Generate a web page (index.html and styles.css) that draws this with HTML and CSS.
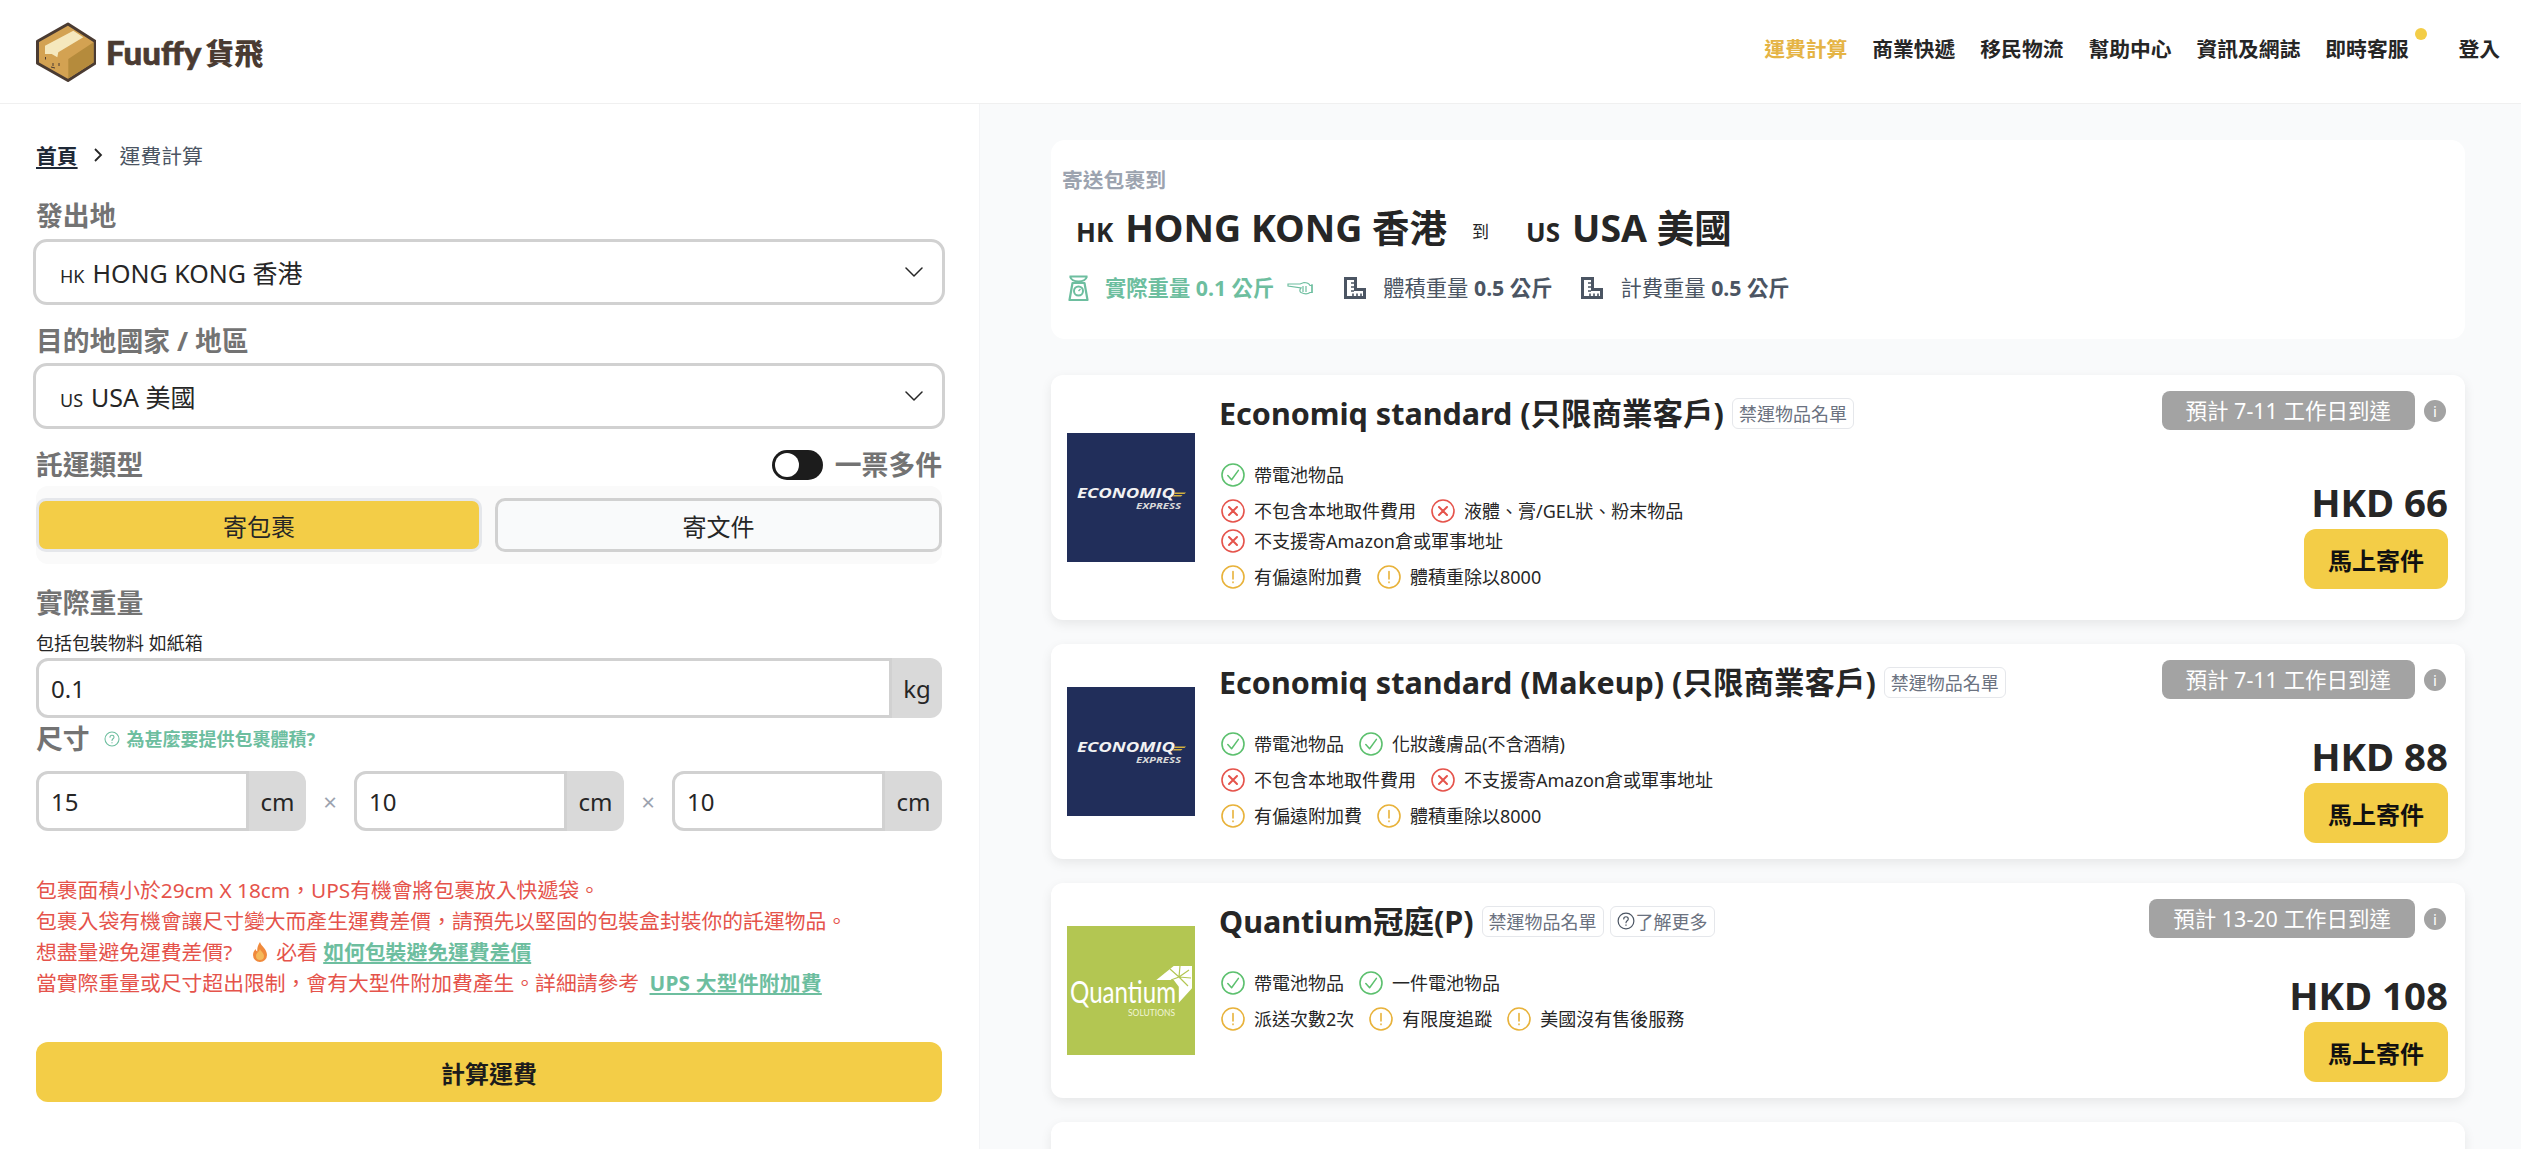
FILE: index.html
```html
<!DOCTYPE html>
<html lang="zh-Hant">
<head>
<meta charset="utf-8">
<title>Fuuffy 貨飛 運費計算</title>
<link rel="stylesheet" href="styles.css">
</head>
<body>
<svg class="sprite" width="0" height="0" aria-hidden="true">
  <symbol id="ok" viewBox="0 0 24 24"><circle cx="12" cy="12" r="11" fill="none" stroke="currentColor" stroke-width="1.6"/><path d="M6.8 12.6l3.8 4.2 6.8-9.4" fill="none" stroke="currentColor" stroke-width="1.5" stroke-linecap="round" stroke-linejoin="round"/></symbol>
  <symbol id="no" viewBox="0 0 24 24"><circle cx="12" cy="12" r="11" fill="none" stroke="currentColor" stroke-width="1.6"/><path d="M8 8l8 8M16 8l-8 8" fill="none" stroke="currentColor" stroke-width="2" stroke-linecap="round"/></symbol>
  <symbol id="warn" viewBox="0 0 24 24"><circle cx="12" cy="12" r="11" fill="none" stroke="currentColor" stroke-width="1.6"/><path d="M12 6.5v7.5M12 17v.6" fill="none" stroke="currentColor" stroke-width="1.6" stroke-linecap="round"/></symbol>
  <symbol id="chev" viewBox="0 0 18 10"><path d="M1 1l8 8 8-8" fill="none" stroke="currentColor" stroke-width="1.5" stroke-linecap="round" stroke-linejoin="round"/></symbol>
  <symbol id="ruler" viewBox="0 0 24 24"><path d="M1 1h13v11h9v11H1z" fill="currentColor"/><path d="M4 4h7v11h9v5H4z" fill="#fff"/><path d="M8 7h3M8 11h3M8 15h3M10 20v-2.500M14 20v-2.500M18 20v-2.500" stroke="currentColor" stroke-width="1.600" fill="none"/></symbol>
  <symbol id="help" viewBox="0 0 24 24"><circle cx="12" cy="12" r="10.5" fill="none" stroke="currentColor" stroke-width="1.6"/><path d="M9 9.3c0-1.8 1.4-3 3-3s3 1.2 3 2.9c0 2.400-3 2.500-3 5M12 17.200v.6" fill="none" stroke="currentColor" stroke-width="1.6" stroke-linecap="round"/></symbol>
</svg>

<header class="topbar">
  <a class="brand" href="#">
    <svg class="brand-box" viewBox="0 0 60 60" aria-hidden="true">
      <path d="M32 2L59 19.300V41.300L32 58.500 1.500 41.300V19.300z" fill="#d3a252" stroke="#4a3b32" stroke-width="3" stroke-linejoin="round"/>
      <path d="M32.300 37L57.500 20.200V40.500L32.300 56.500z" fill="#b58b3c"/>
      <path d="M9 23.700L37.300 8.700 47.300 15.300 22.300 30.300 21.300 35.300 15.700 32H9z" fill="#f5e8bd"/>
      <path d="M9.500 35v2.500M17 41v3M23 41v3M15 45l4 1" stroke="#4a3b32" stroke-width="1" fill="none"/>
    </svg>
    <span class="brand-en">Fuuffy</span><span class="brand-zh">貨飛</span>
  </a>
  <nav class="nav">
    <a class="nav-link is-active" href="#">運費計算</a>
    <a class="nav-link" href="#">商業快遞</a>
    <a class="nav-link" href="#">移民物流</a>
    <a class="nav-link" href="#">幫助中心</a>
    <a class="nav-link" href="#">資訊及網誌</a>
    <a class="nav-link nav-chat" href="#">即時客服<span class="nav-dot"></span></a>
    <a class="nav-link nav-login" href="#">登入</a>
  </nav>
</header>

<main class="layout">
  <section class="form-panel">
    <div class="crumbs"><a class="crumb-home" href="#">首頁</a><svg class="crumb-sep" viewBox="0 0 10 16"><path d="M2 2l6 6-6 6" fill="none" stroke="currentColor" stroke-width="1.800"/></svg><span>運費計算</span></div>

    <div class="label label-first">發出地</div>
    <div class="select"><span class="select-text"><span class="flag">HK</span>HONG KONG 香港</span><svg class="select-arrow"><use href="#chev"/></svg></div>

    <div class="label label-next">目的地國家 / 地區</div>
    <div class="select"><span class="select-text"><span class="flag">US</span>USA 美國</span><svg class="select-arrow"><use href="#chev"/></svg></div>

    <div class="label label-next label-row">
      <span>託運類型</span>
      <span class="toggle-wrap"><span class="toggle"><span class="toggle-knob"></span></span>一票多件</span>
    </div>
    <div class="tabs">
      <button class="tab tab-on">寄包裹</button>
      <button class="tab">寄文件</button>
    </div>

    <div class="label label-weight">實際重量</div>
    <div class="hint">包括包裝物料 如紙箱</div>
    <div class="field field-wide"><input class="field-input" value="0.1"><span class="field-unit unit-kg">kg</span></div>

    <div class="label label-size"><span>尺寸</span><a class="why" href="#"><svg class="why-icon"><use href="#help"/></svg>為甚麼要提供包裹體積?</a></div>
    <div class="dims">
      <div class="field"><input class="field-input" value="15"><span class="field-unit">cm</span></div>
      <span class="times">×</span>
      <div class="field"><input class="field-input" value="10"><span class="field-unit">cm</span></div>
      <span class="times">×</span>
      <div class="field"><input class="field-input" value="10"><span class="field-unit">cm</span></div>
    </div>

    <div class="notes">
      <p>包裹面積小於29cm X 18cm，UPS有機會將包裹放入快遞袋。</p>
      <p>包裹入袋有機會讓尺寸變大而產生運費差價，請預先以堅固的包裝盒封裝你的託運物品。</p>
      <p>想盡量避免運費差價?<svg class="flame" viewBox="0 0 16 22"><path d="M8 1c1 4 7 7 7 13a7 7 0 0 1-14 0c0-3 1.500-4.500 2.500-6 .5 1.500 1 2 1.800 2.500C5 7 6 4 8 1z" fill="#f08a3c"/><path d="M8 8c.8 2.500 4 4 4 7a4 4 0 0 1-8 0c0-3 3-4 4-7z" fill="#f5b95a"/></svg>必看 <a class="note-link" href="#">如何包裝避免運費差價</a></p>
      <p>當實際重量或尺寸超出限制，會有大型件附加費產生。詳細請參考 <a class="note-link link-ups" href="#">UPS 大型件附加費</a></p>
    </div>

    <button class="calc">計算運費</button>
  </section>

  <section class="results">
    <div class="summary">
      <div class="summary-over">寄送包裹到</div>
      <div class="route"><span class="route-flag">HK</span>HONG KONG 香港<span class="route-to">到</span><span class="route-flag">US</span>USA 美國</div>
      <div class="stats">
        <span class="stat stat-green">
          <svg class="stat-scale" viewBox="0 0 20 26"><path d="M1 1.500h18M1.500 1.500c1 3 4 5 8.500 5s7.500-2 8.500-5" fill="none" stroke="currentColor" stroke-width="2"/><path d="M4 8h12l3 17H1z" fill="none" stroke="currentColor" stroke-width="2.200" stroke-linejoin="round"/><circle cx="10" cy="16" r="4.500" fill="none" stroke="currentColor" stroke-width="2"/><path d="M10 16l2-2" stroke="currentColor" stroke-width="1.500"/></svg>
          <span class="stat-text"><b>實際重量 0.1 公斤</b></span>
          <svg class="stat-hand" viewBox="0 0 28 14"><path d="M1 3h12l4-1.500c3 0 5 1 6 3h2v7h-2c-2 1.500-6 1.500-9 0-1.500-1-1.500-3 0-4.500L1 5z" fill="#fff" stroke="currentColor" stroke-width="1.200"/><path d="M16 5v6M19 5v6M25 3v9" stroke="currentColor" stroke-width="1.200"/></svg>
        </span>
        <span class="stat"><svg class="stat-ruler"><use href="#ruler"/></svg><span class="stat-text">體積重量 <b>0.5 公斤</b></span></span>
        <span class="stat"><svg class="stat-ruler"><use href="#ruler"/></svg><span class="stat-text">計費重量 <b>0.5 公斤</b></span></span>
      </div>
    </div>

    <article class="card">
      <svg class="card-logo" viewBox="0 0 128 129">
        <rect width="128" height="129" fill="#212e5a"/>
        <path d="M108 59.500h11l-1.500 1.500h-10.500zM107 62h8.500l-1.500 1.500h-8z" fill="#d4b13f"/>
        <text x="10" y="65" class="e-name" textLength="98" lengthAdjust="spacingAndGlyphs">ECONOMIQ</text>
        <text x="69" y="76" class="e-sub" textLength="45" lengthAdjust="spacingAndGlyphs">EXPRESS</text>
      </svg>
      <div class="card-main">
        <div class="card-title"><h2>Economiq standard (只限商業客戶)</h2><a class="tag" href="#">禁運物品名單</a></div>
        <div class="feats c-ok"><span class="feat"><svg class="feat-icon"><use href="#ok"/></svg><span>帶電池物品</span></span></div>
        <div class="feats c-no"><span class="feat"><svg class="feat-icon"><use href="#no"/></svg><span>不包含本地取件費用</span></span><span class="feat"><svg class="feat-icon"><use href="#no"/></svg><span>液體、膏/GEL狀、粉末物品</span></span><span class="feat feat-break"><svg class="feat-icon"><use href="#no"/></svg><span>不支援寄Amazon倉或軍事地址</span></span></div>
        <div class="feats c-warn"><span class="feat"><svg class="feat-icon"><use href="#warn"/></svg><span>有偏遠附加費</span></span><span class="feat"><svg class="feat-icon"><use href="#warn"/></svg><span>體積重除以8000</span></span></div>
      </div>
      <div class="card-side side-tall">
        <div class="eta-row"><span class="eta">預計 7-11 工作日到達</span><span class="info">i</span></div>
        <div class="price">HKD 66</div>
        <button class="ship">馬上寄件</button>
      </div>
    </article>

    <article class="card">
      <svg class="card-logo" viewBox="0 0 128 129">
        <rect width="128" height="129" fill="#212e5a"/>
        <path d="M108 59.500h11l-1.500 1.500h-10.500zM107 62h8.500l-1.500 1.500h-8z" fill="#d4b13f"/>
        <text x="10" y="65" class="e-name" textLength="98" lengthAdjust="spacingAndGlyphs">ECONOMIQ</text>
        <text x="69" y="76" class="e-sub" textLength="45" lengthAdjust="spacingAndGlyphs">EXPRESS</text>
      </svg>
      <div class="card-main">
        <div class="card-title"><h2>Economiq standard (Makeup) (只限商業客戶)</h2><a class="tag" href="#">禁運物品名單</a></div>
        <div class="feats c-ok"><span class="feat"><svg class="feat-icon"><use href="#ok"/></svg><span>帶電池物品</span></span><span class="feat"><svg class="feat-icon"><use href="#ok"/></svg><span>化妝護膚品(不含酒精)</span></span></div>
        <div class="feats c-no"><span class="feat"><svg class="feat-icon"><use href="#no"/></svg><span>不包含本地取件費用</span></span><span class="feat"><svg class="feat-icon"><use href="#no"/></svg><span>不支援寄Amazon倉或軍事地址</span></span></div>
        <div class="feats c-warn"><span class="feat"><svg class="feat-icon"><use href="#warn"/></svg><span>有偏遠附加費</span></span><span class="feat"><svg class="feat-icon"><use href="#warn"/></svg><span>體積重除以8000</span></span></div>
      </div>
      <div class="card-side">
        <div class="eta-row"><span class="eta">預計 7-11 工作日到達</span><span class="info">i</span></div>
        <div class="price">HKD 88</div>
        <button class="ship">馬上寄件</button>
      </div>
    </article>

    <article class="card">
      <svg class="card-logo" viewBox="0 0 128 129">
        <rect width="128" height="129" fill="#b3c652"/>
        <path d="M89.300 54L106.700 40H125V62.300L111.800 76.700V60.700L106.700 54z" fill="#fff"/>
        <path d="M112 51l-9-8M112 51l1-11M112 51l10-7M112 51l12 1M112 51l9 9M112 51l-8 3" stroke="#b3c652" stroke-width="1.200"/>
        <text x="3" y="77" class="q-name" textLength="106" lengthAdjust="spacingAndGlyphs">Quantium</text>
        <text x="61" y="90" class="q-sub" textLength="47" lengthAdjust="spacingAndGlyphs">SOLUTIONS</text>
      </svg>
      <div class="card-main">
        <div class="card-title"><h2>Quantium冠庭(P)</h2><a class="tag" href="#">禁運物品名單</a><a class="tag tag-more" href="#"><svg class="tag-icon"><use href="#help"/></svg>了解更多</a></div>
        <div class="feats c-ok"><span class="feat"><svg class="feat-icon"><use href="#ok"/></svg><span>帶電池物品</span></span><span class="feat"><svg class="feat-icon"><use href="#ok"/></svg><span>一件電池物品</span></span></div>
        <div class="feats c-warn"><span class="feat"><svg class="feat-icon"><use href="#warn"/></svg><span>派送次數2次</span></span><span class="feat"><svg class="feat-icon"><use href="#warn"/></svg><span>有限度追蹤</span></span><span class="feat"><svg class="feat-icon"><use href="#warn"/></svg><span>美國沒有售後服務</span></span></div>
      </div>
      <div class="card-side">
        <div class="eta-row"><span class="eta">預計 13-20 工作日到達</span><span class="info">i</span></div>
        <div class="price">HKD 108</div>
        <button class="ship">馬上寄件</button>
      </div>
    </article>

    <article class="card card-empty"></article>
  </section>
</main>
</body>
</html>
```

FILE: styles.css
```css
* { box-sizing: border-box; }
html, body { height: 100%; }
body {
  margin: 0;
  height: 1149px;
  overflow: hidden;
  background: #fff;
  color: #262626;
  font-family: "Noto Sans", "Noto Sans CJK TC", sans-serif;
  font-size: 18px;
}
a { color: inherit; text-decoration: none; }
button, input { font-family: inherit; }
.sprite { position: absolute; }

/* top bar */
.topbar {
  height: 104px;
  display: flex;
  align-items: center;
  justify-content: space-between;
  padding: 0 21px 0 36px;
  border-bottom: 1px solid #f0f0f0;
}
.brand { display: flex; align-items: center; color: #4a3b32; }
.brand-box { width: 60px; height: 60px; margin-right: 10px; }
.brand-en { font-family: "Lato", sans-serif; font-weight: 900; font-size: 33px; line-height: 40px; -webkit-text-stroke: 0.7px #4a3b32; }
.brand-zh { font-family: "Noto Sans CJK TC", sans-serif; font-weight: 900; font-size: 29px; line-height: 40px; margin-left: 4px; }
.nav { display: flex; gap: 24.9px; align-items: center; margin-bottom: 5px; }
.nav-link { position: relative; font-size: 20.8px; font-weight: 700; line-height: 30px; color: #262626; white-space: nowrap; }
.nav-link.is-active { color: #e5b445; }
.nav-dot { position: absolute; left: 90px; top: -6px; width: 12px; height: 12px; border-radius: 50%; background: #f3cd47; }
.nav-login { margin-left: 25px; }

/* layout */
.layout { display: flex; height: 1045px; }
.form-panel { width: 980px; flex: none; padding: 36px 37px 0 36px; border-right: 1px solid #f3f4f6; }
.results { flex: 1; min-width: 0; background: #f9fafb; padding: 36px 56px 0 71px; }

/* form */
.crumbs { display: flex; align-items: center; height: 30px; font-size: 20.8px; color: #4b5563; }
.crumb-home { font-weight: 700; color: #1f2937; text-decoration: underline; text-underline-offset: 3px; }
.crumb-sep { width: 10px; height: 16px; margin: 0 17px 0 15px; color: #262626; }
.label { font-size: 26.8px; font-weight: 700; line-height: 36px; color: #737373; }
.label-first { margin-top: 28px; margin-bottom: 5px; }
.label-next { margin-top: 18px; margin-bottom: 4px; }
.label-row { display: flex; justify-content: space-between; align-items: center; margin-bottom: 3px; }
.select {
  height: 66px;
  margin: 0 -3px;
  display: flex;
  align-items: center;
  padding: 0 19px 0 24px;
  border: 3px solid #d1d1d1;
  border-radius: 14px;
  font-size: 25px;
  color: #262626;
}
.flag { font-size: 18px; margin-right: 8px; }
.select-arrow { width: 18px; height: 10px; margin-left: auto; color: #262626; }
.toggle-wrap { display: flex; align-items: center; gap: 12px; }
.toggle { width: 51px; height: 30px; border-radius: 15px; background: #1c1c1c; padding: 3px; display: block; }
.toggle-knob { display: block; width: 24px; height: 24px; border-radius: 50%; background: #fff; }
.tabs { display: grid; grid-template-columns: 446px 447px; gap: 13px; padding: 12px 0; background: #fafafa; border-radius: 12px; }
.tab { height: 54px; border: 3px solid #d1d1d1; border-radius: 10px; background: #f9fafb; font-size: 24px; color: #262626; padding: 0; }
.tab-on { background: #f3cd47; border-color: #e5e7eb; }
.label-weight { margin-top: 21px; }
.hint { margin-top: 10px; font-size: 18px; line-height: 24px; color: #262626; }
.field { display: flex; height: 60px; flex: 1; min-width: 0; }
.field-wide { margin-top: 3px; }
.field-input {
  flex: 1;
  min-width: 0;
  height: 100%;
  border: 3px solid #d1d1d1;
  border-radius: 12px 0 0 12px;
  padding: 0 12px;
  font-size: 24px;
  color: #262626;
  background: #fff;
  outline: none;
}
.field-unit {
  width: 57px;
  flex: none;
  background: #d9d9d9;
  border-radius: 0 12px 12px 0;
  display: flex;
  align-items: center;
  justify-content: center;
  font-size: 24px;
  color: #262626;
}
.unit-kg { width: 50px; }
.label-size { display: flex; align-items: center; margin-top: 3px; }
.why { display: flex; align-items: center; margin-left: 14px; font-size: 18px; line-height: 24px; color: #6dbe9f; }
.why-icon { width: 16px; height: 16px; margin-right: 7px; }
.dims { display: flex; align-items: center; margin-top: 14px; }
.times { width: 48px; text-align: center; font-size: 24px; color: #9ca3af; flex: none; }
.notes { margin-top: 44px; font-size: 20.8px; line-height: 31px; color: #e5534b; }
.notes p { margin: 0; white-space: nowrap; }
.flame { width: 16px; height: 22px; margin: 0 8px 0 20px; vertical-align: -3px; }
.note-link { font-weight: 700; color: #6dbe9f; text-decoration: underline; }
.link-ups { margin-left: 5px; letter-spacing: 0.2px; }
.calc { display: block; width: 100%; height: 60px; margin-top: 43px; border: 0; border-radius: 12px; background: #f3cd47; font-size: 24px; font-weight: 700; color: #1c1c1c; }

/* summary */
.summary { height: 199px; background: #fff; border-radius: 14px; padding: 26px 11px 0; }
.summary-over { font-size: 20.8px; font-weight: 700; line-height: 28px; color: #9ca3af; }
.route { display: flex; align-items: baseline; height: 50px; margin-top: 9px; padding-left: 14px; font-size: 37.5px; font-weight: 700; line-height: 50px; white-space: nowrap; color: #262626; }
.route-flag { font-size: 26px; margin-right: 12px; }
.route-to { font-size: 17px; font-weight: 400; margin: 0 37px 0 25px; position: relative; top: -4px; }
.stats { display: flex; align-items: center; margin-top: 21px; padding-left: 6px; gap: 28px; }
.stat { display: flex; align-items: center; color: #4b5563; font-size: 21.3px; line-height: 28px; white-space: nowrap; }
.stat-green { color: #6dbe9f; }
.stat-scale { width: 21px; height: 26px; margin-right: 16px; }
.stat-hand { width: 28px; height: 14px; margin-left: 13px; }
.stat-ruler { width: 24px; height: 24px; margin-right: 16px; }
.stat b { font-weight: 700; }

/* cards */
.card {
  margin-top: 36px;
  display: flex;
  padding: 16px 17px 16px 16px;
  min-height: 215px;
  background: #fff;
  border-radius: 12px;
  box-shadow: 0 4px 12px rgba(0, 0, 0, 0.08);
}
.card + .card { margin-top: 24px; }
.card-empty { height: 215px; }
.card-logo { width: 128px; height: 129px; flex: none; align-self: center; margin-right: 26px; }
.e-name { font: italic 700 14px "Open Sans", sans-serif; fill: #f2f2f2; }
.e-sub { font: italic 700 9px "Open Sans", sans-serif; fill: #d9d9d9; }
.q-name { font: 400 31px "Lato", sans-serif; fill: #fff; }
.q-sub { font: 400 10px "Lato", sans-serif; fill: #f1f5d8; }
.card-main { flex: 1; min-width: 0; padding-bottom: 12px; }
.card-title { display: flex; align-items: center; height: 44px; gap: 6px; margin-bottom: 25px; }
.card-title h2 { margin: 0 2px 0 -2px; font-size: 30.5px; font-weight: 700; line-height: 44px; color: #262626; white-space: nowrap; }
.tag {
  display: flex;
  align-items: center;
  height: 31px;
  padding: 0 6px;
  border: 1px solid #e5e7eb;
  border-radius: 6px;
  font-size: 18px;
  color: #6b7280;
  white-space: nowrap;
}
.tag-icon { width: 18px; height: 18px; margin-right: 1px; color: #4b5563; }
.feats { display: flex; flex-wrap: wrap; column-gap: 15px; margin-bottom: 6px; width: 720px; }
.feats:last-child { margin-bottom: 0; }
.feat { display: flex; align-items: center; height: 30px; font-size: 18px; line-height: 30px; color: #262626; white-space: nowrap; }
.feat-break { flex-basis: 100%; }
.feat-icon { width: 24px; height: 24px; margin-right: 9px; flex: none; }
.c-ok .feat-icon { color: #5cc06e; }
.c-no .feat-icon { color: #e5534b; }
.c-warn .feat-icon { color: #e8b23a; }
.card-side { flex: none; display: flex; flex-direction: column; align-items: flex-end; }
.side-tall { padding-bottom: 15px; }
.eta-row { display: flex; align-items: center; }
.eta { display: block; height: 39px; padding: 0 24px; border-radius: 8px; background: #a3a3a3; color: #fff; font-size: 21.5px; line-height: 39px; white-space: nowrap; }
.info { width: 22px; height: 22px; margin-left: 9px; margin-right: 2px; border-radius: 50%; background: #a3a3a3; color: #fff; font-size: 15px; line-height: 22px; text-align: center; }
.price { margin-top: auto; margin-bottom: 3px; font-size: 38.4px; font-weight: 700; line-height: 47px; color: #262626; }
.ship { width: 144px; height: 60px; border: 0; border-radius: 12px; background: #f3cd47; color: #111; font-size: 24px; font-weight: 700; padding: 0; }
```
